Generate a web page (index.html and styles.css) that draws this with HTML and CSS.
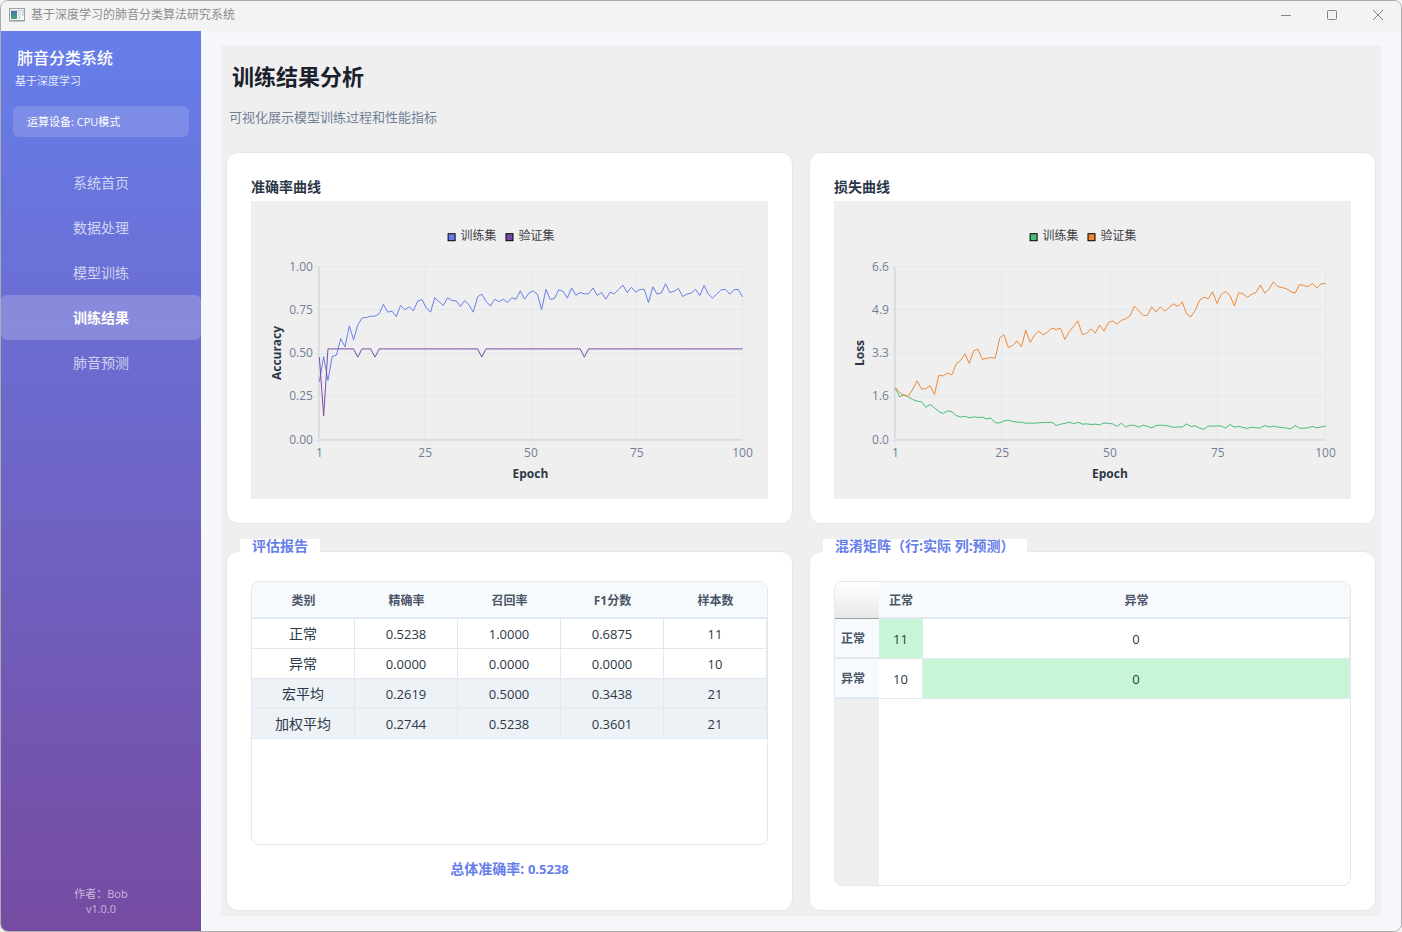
FILE: index.html
```html
<!DOCTYPE html>
<html lang="zh-CN">

<head>
    <meta charset="UTF-8">
    <meta name="viewport" content="width=device-width, initial-scale=1">
    <title>基于深度学习的肺音分类算法研究系统</title>
    <link rel="stylesheet" href="styles.css">
</head>

<body>
    <div class="window">
        <header class="titlebar">
            <svg class="app-icon" width="16" height="14" viewBox="0 0 16 14" aria-hidden="true">
                <defs>
                    <linearGradient id="icon-fill" x1="0" y1="0" x2="0" y2="1">
                        <stop offset="0" stop-color="#4673a6" />
                        <stop offset="1" stop-color="#4fa37c" />
                    </linearGradient>
                </defs>
                <rect x="0.5" y="0.5" width="15" height="12" fill="#f6f6f6" stroke="#9b9fa3" />
                <path d="M1 2.5h14" stroke="#cfd3d6" />
                <rect x="2" y="3" width="6" height="8" fill="url(#icon-fill)" />
                <rect x="9" y="3" width="3" height="8" fill="#dde3e8" />
                <path d="M14 3v5" stroke="#9cc5b4" />
                <path d="M0 13.5h16" stroke="#c6c6c6" />
            </svg>
            <span class="titlebar-text">基于深度学习的肺音分类算法研究系统</span>
            <div class="controls">
                <button type="button" aria-label="最小化"><svg width="12" height="12" viewBox="0 0 12 12"><path d="M1 6.5h10" /></svg></button>
                <button type="button" aria-label="最大化"><svg width="12" height="12" viewBox="0 0 12 12"><rect x="1.5" y="1.5" width="9" height="9" rx="1" /></svg></button>
                <button type="button" aria-label="关闭"><svg width="12" height="12" viewBox="0 0 12 12"><path d="M1 1l10 10M11 1l-10 10" /></svg></button>
            </div>
        </header>

        <div class="layout">
            <aside class="sidebar">
                <div class="brand">肺音分类系统</div>
                <div class="brand-sub">基于深度学习</div>
                <div class="device">运算设备: CPU模式</div>
                <nav class="menu">
                    <button type="button">系统首页</button>
                    <button type="button">数据处理</button>
                    <button type="button">模型训练</button>
                    <button type="button" class="active" aria-current="page">训练结果</button>
                    <button type="button">肺音预测</button>
                </nav>
                <footer class="author">作者：Bob<br>v1.0.0</footer>
            </aside>

            <main class="main">
                <div class="content">
                    <h1>训练结果分析</h1>
                    <p class="subtitle">可视化展示模型训练过程和性能指标</p>

                    <div class="grid">
                        <section class="card">
                            <h2>准确率曲线</h2>
                            <svg class="chart" id="accuracy-chart" viewBox="0 0 518 298" role="img" aria-label="准确率曲线"></svg>
                        </section>

                        <section class="card">
                            <h2>损失曲线</h2>
                            <svg class="chart" id="loss-chart" viewBox="0 0 518 298" role="img" aria-label="损失曲线"></svg>
                        </section>

                        <section class="group">
                            <h2 class="group-title">评估报告</h2>
                            <div class="card group-box">
                                <div class="table-frame">
                                    <table class="report">
                                        <thead>
                                            <tr><th>类别</th><th>精确率</th><th>召回率</th><th>F1分数</th><th>样本数</th></tr>
                                        </thead>
                                        <tbody>
                                            <tr><th>正常</th><td>0.5238</td><td>1.0000</td><td>0.6875</td><td>11</td></tr>
                                            <tr><th>异常</th><td>0.0000</td><td>0.0000</td><td>0.0000</td><td>10</td></tr>
                                            <tr class="average"><th>宏平均</th><td>0.2619</td><td>0.5000</td><td>0.3438</td><td>21</td></tr>
                                            <tr class="average"><th>加权平均</th><td>0.2744</td><td>0.5238</td><td>0.3601</td><td>21</td></tr>
                                        </tbody>
                                    </table>
                                </div>
                                <p class="overall">总体准确率: <span>0.5238</span></p>
                            </div>
                        </section>

                        <section class="group">
                            <h2 class="group-title">混淆矩阵（行:实际 列:预测）</h2>
                            <div class="card group-box">
                                <div class="table-frame matrix-frame">
                                    <table class="matrix">
                                        <thead>
                                            <tr><td class="corner"></td><th class="narrow">正常</th><th>异常</th></tr>
                                        </thead>
                                        <tbody>
                                            <tr><th>正常</th><td class="hit">11</td><td>0</td></tr>
                                            <tr><th>异常</th><td>10</td><td class="hit">0</td></tr>
                                        </tbody>
                                    </table>
                                </div>
                            </div>
                        </section>
                    </div>
                </div>
            </main>
        </div>
    </div>

    <script src="charts.js"></script>
</body>

</html>
```

FILE: styles.css
```css
* {
    box-sizing: border-box;
}

body {
    margin: 0;
    background: #f3f3f3;
    color: #2d3748;
    font-family: "Open Sans", "Noto Sans CJK SC", sans-serif;
    font-size: 14px;
}

h1,
h2,
p {
    margin: 0;
}

button {
    border: none;
    background: none;
    padding: 0;
    font-family: inherit;
    cursor: pointer;
}

.window {
    display: flex;
    flex-direction: column;
    min-height: 100vh;
    border: 1px solid #acacac;
    border-radius: 8px;
    overflow: hidden;
    background: #f5f7fb;
}

/* title bar */
.titlebar {
    display: flex;
    align-items: center;
    height: 30px;
    padding: 0 0 2px 8px;
    background: #f3f3f3;
    color: #8c8c8c;
    font-size: 12px;
}

.titlebar-text {
    margin-left: 6px;
    line-height: 28px;
}

.controls {
    display: flex;
    margin-left: auto;
    height: 28px;
}

.controls button {
    display: flex;
    align-items: center;
    justify-content: center;
    width: 46px;
}

.controls svg {
    fill: none;
    stroke: #858585;
}

.layout {
    display: flex;
    flex: 1;
}

/* sidebar */
.sidebar {
    display: flex;
    flex-direction: column;
    flex: none;
    width: 200px;
    background: linear-gradient(#667eea, #764ba2);
    color: #fff;
}

.brand {
    padding: 15px 16px 0;
    font-size: 16px;
    font-weight: 500;
    line-height: 24px;
}

.brand-sub {
    padding: 0 14px;
    color: rgba(255, 255, 255, 0.85);
    font-size: 11px;
    line-height: 22px;
}

.device {
    margin: 14px 12px 23px;
    padding: 0 14px;
    border-radius: 6px;
    background: rgba(255, 255, 255, 0.15);
    font-size: 11px;
    line-height: 31px;
}

.menu {
    display: flex;
    flex-direction: column;
}

.menu button {
    height: 45px;
    padding-bottom: 2px;
    border-radius: 6px;
    color: rgba(255, 255, 255, 0.7);
    font-size: 14px;
}

.menu .active {
    background: rgba(255, 255, 255, 0.2);
    color: #fff;
    font-weight: bold;
}

.author {
    margin-top: auto;
    padding-bottom: 15px;
    color: rgba(255, 255, 255, 0.6);
    font-family: "Open Sans", "Noto Sans CJK TC", sans-serif;
    font-size: 11px;
    line-height: 15px;
    text-align: center;
}

/* content */
.main {
    display: flex;
    flex: 1;
    min-width: 0;
    padding: 15px 20px;
}

.content {
    display: flex;
    flex-direction: column;
    flex: 1;
    min-width: 0;
    padding: 14px 5px 5px;
    background: #efefef;
}

h1 {
    padding-left: 6px;
    color: #1a202c;
    font-size: 22px;
    line-height: 32px;
}

.subtitle {
    margin: 15px 0 25px;
    padding-left: 3px;
    color: #718096;
    font-size: 13px;
    line-height: 20px;
}

.grid {
    display: grid;
    flex: 1;
    grid-template-columns: repeat(2, minmax(0, 1fr));
    grid-template-rows: auto 1fr;
    gap: 15px 16px;
}

.card {
    padding: 24px;
    border: 1px solid #e2e8f0;
    border-radius: 12px;
    background: #fff;
}

.card h2 {
    color: #2d3748;
    font-size: 14px;
    line-height: 20px;
    margin-bottom: 4px;
}

.group {
    display: flex;
    flex-direction: column;
}

/* sits on the top border of the box */
.group-title {
    position: relative;
    align-self: flex-start;
    height: 13px;
    margin: 0 0 -1px 14px;
    padding: 0 12px;
    background: #fff;
    color: #667eea;
    font-size: 14px;
    line-height: 13px;
}

.group-box {
    display: flex;
    flex-direction: column;
    flex: 1;
    padding-top: 29px;
}

.table-frame {
    flex: 1;
    border: 1px solid #e2e8f0;
    border-radius: 8px;
    overflow: hidden;
}

table {
    width: 100%;
    border-collapse: separate;
    border-spacing: 0;
    table-layout: fixed;
    text-align: center;
}

th,
td {
    padding: 0;
    border: 0 solid #e2e8f0;
}

td {
    font-size: 13px;
}

thead th {
    height: 37px;
    border-bottom-width: 2px;
    background: #f7fafc;
    color: #4a5568;
    font-size: 12px;
}

.report tbody th,
.report tbody td {
    height: 30px;
    border-width: 0 1px 1px 0;
    line-height: 20px;
}

.report tbody th {
    font-weight: normal;
}

.average {
    background: #edf2f7;
}

.overall {
    margin: 14px 0 7px;
    color: #667eea;
    font-weight: bold;
    line-height: 20px;
    text-align: center;
}

.overall span {
    font-size: 13px;
}

/* confusion matrix */
.matrix-frame {
    background: linear-gradient(90deg, #efefef 44px, #fff 44px);
}

.corner {
    width: 44px;
    border-bottom: 1px solid #a0a0a0;
    background: linear-gradient(#fff, #e8e8e8);
}

.narrow {
    width: 44px;
}

.matrix tbody th {
    height: 40px;
    padding-right: 8px;
    border-bottom-width: 2px;
    background: #f7fafc;
    color: #4a5568;
    font-size: 12px;
}

.matrix tbody td {
    border-width: 0 1px 1px 0;
    background: #fff;
}

.matrix tbody .hit {
    background: #c6f6d5;
}

/* charts */
.chart {
    display: block;
    width: 100%;
    height: 298px;
    background: #efefef;
    font-size: 12px;
}

.chart .grid-line {
    stroke: #e2e8f0;
}

.chart .axis-line {
    fill: none;
    stroke: #dcdddf;
    stroke-width: 2;
}

.chart .tick {
    fill: #718096;
}

.chart .axis-title {
    fill: #2d3748;
    font-weight: bold;
    text-anchor: middle;
}

.chart .legend {
    fill: #404044;
}

.chart .series {
    fill: none;
    stroke-width: 1;
}
```

FILE: charts.js
```javascript
const accuracyTrain = [
    .334, .48, .342, .48, .488, .583, .535, .656, .576, .662,
    .702, .704, .712, .712, .726, .781, .735, .741, .71, .774,
    .749, .766, .743, .798, .808, .76, .735, .818, .795, .774,
    .818, .802, .8, .768, .802, .777, .735, .823, .839, .798,
    .77, .81, .795, .81, .791, .818, .81, .858, .81, .845,
    .858, .839, .75, .866, .808, .814, .864, .856, .816, .875,
    .833, .848, .841, .841, .875, .831, .848, .81, .85, .841,
    .866, .891, .848, .879, .85, .866, .866, .791, .881, .839,
    .846, .898, .848, .856, .871, .825, .839, .845, .866, .831,
    .889, .839, .816, .841, .864, .866, .839, .864, .866, .823
];

// the validation set has 21 samples, so accuracy moves in steps of 1/21
const accuracyVal = new Array(100).fill(11 / 21);
accuracyVal[0] = 10 / 21;
accuracyVal[1] = .138;
[10, 14, 39, 63].forEach(epoch => accuracyVal[epoch - 1] = 10 / 21);

// loss is kept as plot rows: 554 is zero, 33 is the top of the axis
const lossTrain = [
    400, 425, 418, 426, 433, 438, 440, 456, 448, 458,
    469, 475, 467, 470, 481, 486, 483, 488, 485, 487,
    486, 491, 489, 503, 503, 497, 495, 499, 501, 501,
    504, 504, 504, 503, 502, 502, 501, 511, 507, 505,
    501, 506, 501, 507, 506, 508, 507, 509, 503, 505,
    506, 514, 504, 516, 510, 511, 516, 510, 514, 518,
    511, 510, 511, 513, 517, 515, 516, 506, 514, 512,
    519, 522, 513, 513, 512, 513, 519, 508, 516, 514,
    517, 520, 516, 518, 518, 511, 516, 513, 516, 517,
    519, 521, 511, 519, 519, 518, 514, 518, 515, 513
];

const lossVal = [
    397, 412, 421, 423, 402, 377, 402, 400, 392, 418,
    361, 362, 354, 359, 326, 316, 296, 325, 287, 282,
    313, 309, 308, 309, 249, 239, 277, 271, 257, 275,
    225, 262, 240, 228, 239, 231, 219, 223, 219, 253,
    230, 214, 197, 238, 235, 221, 234, 210, 228, 203,
    197, 207, 196, 191, 182, 153, 167, 181, 181, 155,
    171, 155, 168, 157, 146, 154, 140, 176, 185, 166,
    136, 126, 131, 110, 145, 118, 109, 121, 152, 113,
    116, 127, 117, 112, 90, 114, 102, 80, 94, 97,
    101, 109, 114, 88, 91, 95, 84, 99, 86, 85
];

const TOP = 65;
const BOTTOM = 239;
const RIGHT = 492;

function drawChart(id, options) {
    const left = options.left;
    const width = RIGHT - left;
    const height = BOTTOM - TOP;
    let out = '';

    for (let i = 0; i < 5; i++) {
        const x = Math.floor(left + width * i / 4) + .5;
        const y = Math.floor(TOP + height * i / 4) + .5;
        out += `<path class="grid-line" d="M${x} ${TOP}V${BOTTOM + 5}M${left - 4} ${y}H${RIGHT}"/>`;
        out += `<text class="tick" x="${x}" y="256" text-anchor="middle">${options.xTicks[i]}</text>`;
        out += `<text class="tick" x="${left - 6}" y="${y + 4}" text-anchor="end">${options.yTicks[i]}</text>`;
    }
    out += `<path class="axis-line" d="M${left} ${TOP}V${BOTTOM}H${RIGHT}"/>`;

    options.series.forEach((s, n) => {
        const points = s.data.map((v, i) => {
            const x = left + .5 + width * i / (s.data.length - 1);
            const y = BOTTOM - height * (v - options.zero) / (options.max - options.zero);
            return x.toFixed(1) + ',' + y.toFixed(1);
        });
        out += `<polyline class="series" stroke="${s.color}" points="${points.join(' ')}"/>`;

        const lx = options.legend + n * 58;
        out += `<rect x="${lx + .5}" y="32.5" width="7" height="7" fill="${s.color}" stroke="#000"/>`;
        out += `<text class="legend" x="${lx + 13}" y="39">${s.name}</text>`;
    });

    const mid = left + width / 2;
    out += `<text class="axis-title" x="${mid}" y="277">Epoch</text>`;
    out += `<text class="axis-title" transform="translate(30 152) rotate(-90)">${options.title}</text>`;
    document.getElementById(id).innerHTML = out;
}

drawChart('accuracy-chart', {
    title: 'Accuracy',
    left: 68,
    legend: 197,
    zero: 0,
    max: 1,
    xTicks: [1, 25, 50, 75, 100],
    yTicks: ['1.00', '0.75', '0.50', '0.25', '0.00'],
    series: [
        { name: '训练集', color: '#667eea', data: accuracyTrain },
        { name: '验证集', color: '#764ba2', data: accuracyVal }
    ]
});

drawChart('loss-chart', {
    title: 'Loss',
    left: 61,
    legend: 196,
    zero: 554,
    max: 33,
    xTicks: [1, 25, 50, 75, 100],
    yTicks: ['6.6', '4.9', '3.3', '1.6', '0.0'],
    series: [
        { name: '训练集', color: '#48bb78', data: lossTrain },
        { name: '验证集', color: '#ed8936', data: lossVal }
    ]
});
```
